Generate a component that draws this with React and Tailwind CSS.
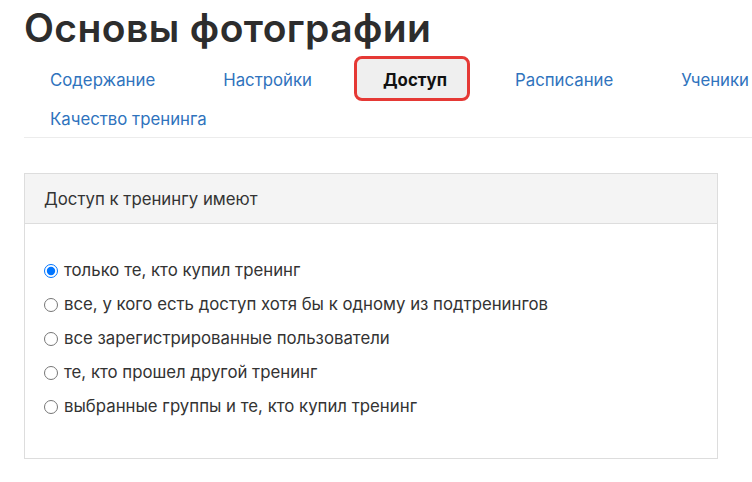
import React from "react";

const tabs = [
  { label: "Содержание" },
  { label: "Настройки" },
  { label: "Доступ", active: true },
  { label: "Расписание" },
  { label: "Ученики" },
  { label: "Качество тренинга" },
];

const options = [
  "только те, кто купил тренинг",
  "все, у кого есть доступ хотя бы к одному из подтренингов",
  "все зарегистрированные пользователи",
  "те, кто прошел другой тренинг",
  "выбранные группы и те, кто купил тренинг",
];

export default function App() {
  return (
    <div
      className="w-[752px] h-[482px] overflow-hidden bg-white text-[#333]"
      style={{ fontFamily: "Inter, 'Noto Sans', sans-serif" }}
    >
      <h1 className="pl-[24px] pt-[4px] text-[39px] leading-[48px] font-semibold text-[#2d2d2d] tracking-[0.4px]">
        Основы фотографии
      </h1>
      <div className="ml-[24px] mt-[7px] border-b border-[#ececec]">
        <div className="flex flex-wrap gap-x-[16px] w-[780px]">
          {tabs.map((t) => (
            <div
              key={t.label}
              className={
                t.active
                  ? "h-[39px] ml-[3px] mr-[6px] pl-[26px] pr-[20px] pt-[4px] flex items-center rounded-[5px] bg-[#efefef] outline-[3px] outline-solid outline-[#e53935] text-[16.8px] font-bold text-[#111]"
                  : "h-[39px] px-[26px] pt-[4px] flex items-center text-[16.8px] text-[#2f73bd]"
              }
            >
              {t.label}
            </div>
          ))}
        </div>
      </div>
      <div className="ml-[24px] mt-[35px] w-[694px] border border-[#dddddd]">
        <div className="h-[50px] pt-[3px] bg-[#f4f4f4] border-b border-[#dddddd] flex items-center pl-[19px] text-[16.8px] text-[#333]">
          Доступ к тренингу имеют
        </div>
        <div className="pt-[37px] pb-[41px] pl-[19px] flex flex-col gap-[14px]">
          {options.map((o, i) => (
            <label key={o} className="flex items-center h-[20px] text-[16.8px] text-[#333]">
              <input
                type="radio"
                name="access"
                defaultChecked={i === 0}
                className="m-0 mr-[6px] w-[14px] h-[14px]"
              />
              <span>{o}</span>
            </label>
          ))}
        </div>
      </div>
    </div>
  );
}
